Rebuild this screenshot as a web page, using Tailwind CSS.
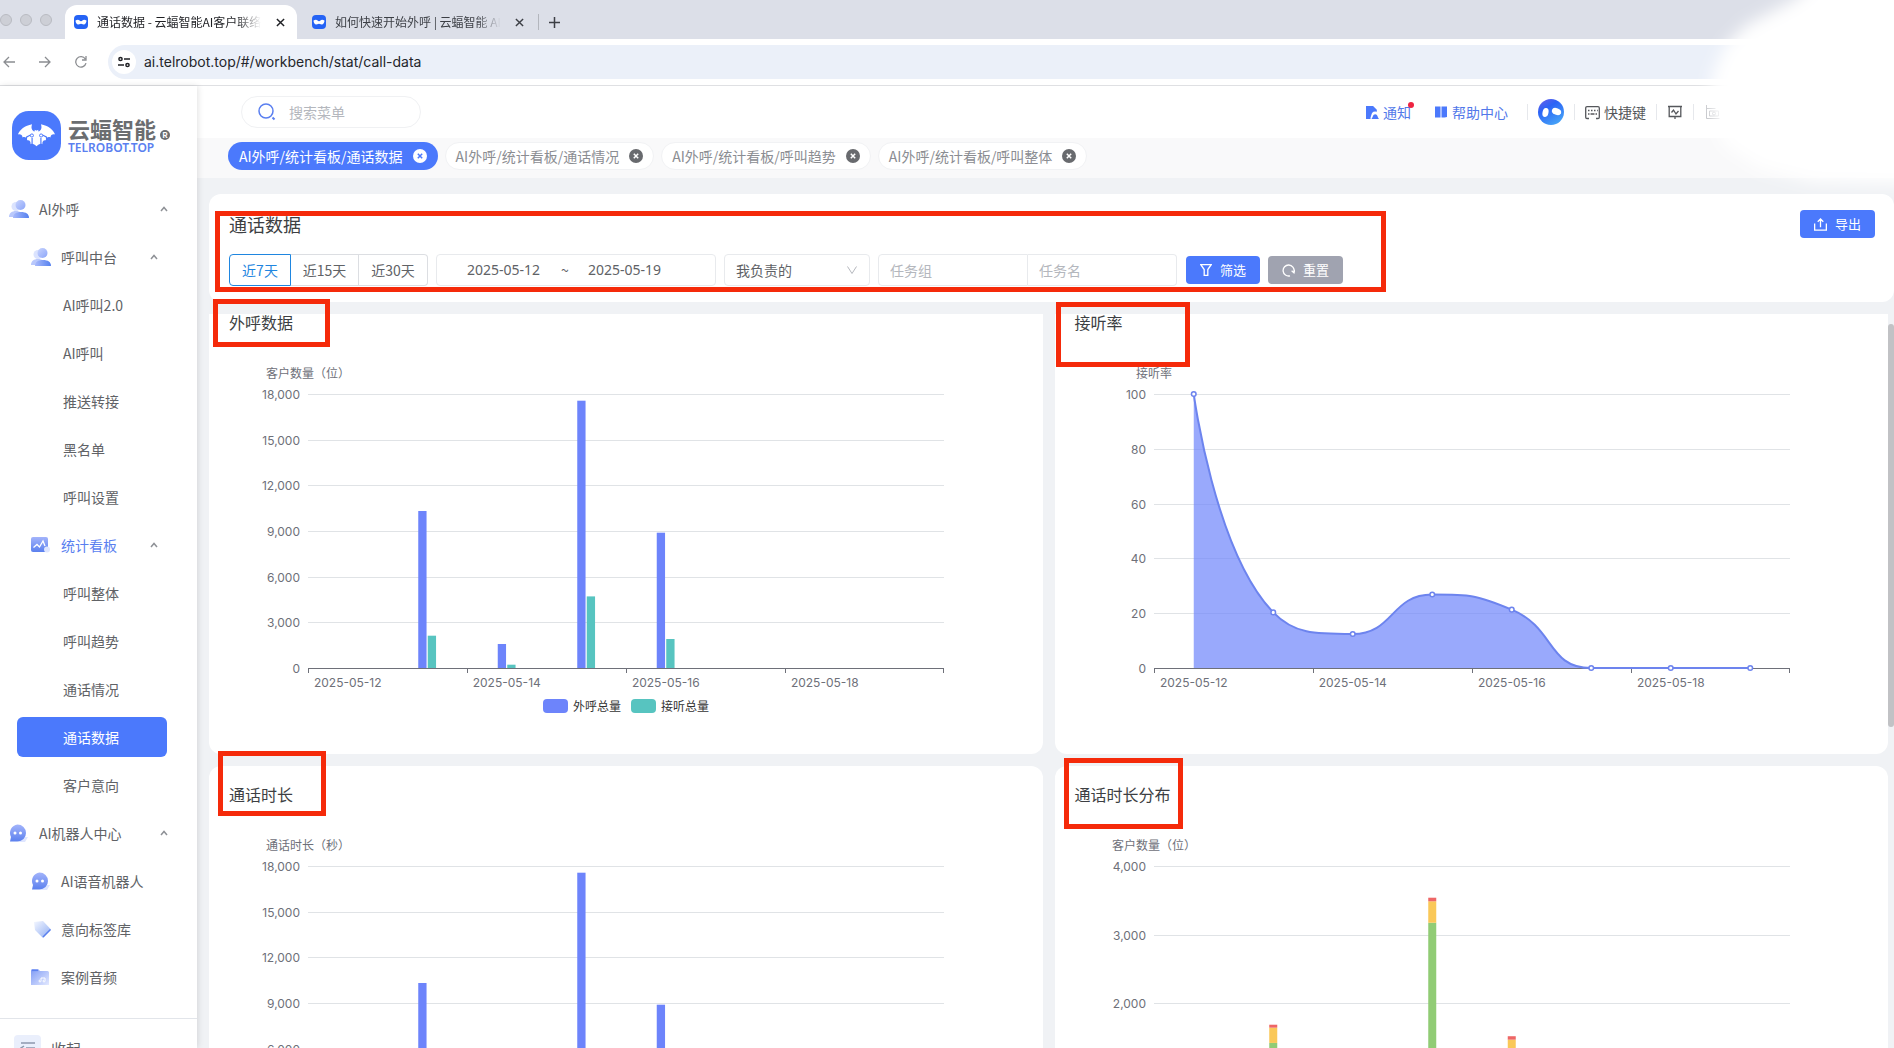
<!DOCTYPE html>
<html lang="zh-CN">
<head>
  <meta charset="UTF-8">
  <meta name="viewport" content="width=device-width, initial-scale=1.0">
  <title>通话数据 - 云蝠智能AI客户联络</title>

  <!-- Tailwind CSS CDN -->
  <script src="https://cdn.jsdelivr.net/npm/@tailwindcss/browser@4"></script>
</head>
<body class="relative flex h-screen flex-col overflow-hidden bg-white font-['Noto_Sans_CJK_SC',sans-serif] text-sm text-[#606266]">

  <!-- Shared icons -->
  <svg class="absolute size-0" aria-hidden="true" xmlns="http://www.w3.org/2000/svg">
    <defs>
      <linearGradient id="grad-soft" x1="0" y1="0" x2="1" y2="1">
        <stop offset="0" stop-color="#c9d4fd" />
        <stop offset="1" stop-color="#8ba5f9" />
      </linearGradient>
      <linearGradient id="grad-strong" x1="0" y1="0" x2="1" y2="0">
        <stop offset="0" stop-color="#a9bafb" />
        <stop offset="1" stop-color="#5581ef" />
      </linearGradient>
      <linearGradient id="grad-down" x1="0" y1="0" x2="0" y2="1">
        <stop offset="0" stop-color="#a3b4fb" />
        <stop offset="1" stop-color="#5b80ee" />
      </linearGradient>
      <linearGradient id="grad-fade" x1="0" y1="0" x2="1" y2="1">
        <stop offset="0" stop-color="#7f9bf5" />
        <stop offset="1" stop-color="#e3e9ff" />
      </linearGradient>
      <linearGradient id="grad-tag" x1="0" y1="0" x2="1" y2="1">
        <stop offset="0" stop-color="#f4f7ff" />
        <stop offset="1" stop-color="#8fadf3" />
      </linearGradient>
    </defs>
    <symbol id="icon-bat" viewBox="0 0 50 50">
      <rect width="50" height="50" rx="17" fill="#4b79fc" />
      <path fill="#fff" d="M6 24c2-5 7-9 14.500-10.500-1.500 4 0 6.500 2.500 7.500l.3-1.800 1.200.8h1l1.200-.8.3 1.800c2.500-1 4-3.500 2.500-7.500C37 15 42 19 44 24c-2.500-.8-4.500.4-4.800 3-2.400-1-4.400.2-4.800 2.800-2.600-.4-3.600 1.400-3.400 4.200-1.600-1-2.800-.4-6 2-3.200-2.400-4.400-3-6-2 .2-2.800-.8-4.600-3.400-4.200-.4-2.600-2.400-3.800-4.800-2.800C10.500 24.400 8.500 23.200 6 24z" />
      <path fill="none" stroke="#4b79fc" stroke-width="1.200" d="M14.500 30l.5-3.500 4-2M35.500 30l-.5-3.500-4-2M20.500 34v-6.500M29.500 34v-6.500" />
      <circle cx="20.300" cy="25" r="1.600" fill="#fff" stroke="#4b79fc" />
      <circle cx="29.700" cy="25" r="1.600" fill="#fff" stroke="#4b79fc" />
    </symbol>
    <symbol id="icon-bat-small" viewBox="0 0 14 14">
      <rect width="14" height="14" rx="4" fill="#2563f5" />
      <path fill="#fff" d="M1.500 5.500C3 4.500 4.500 4.300 5.300 5.200L6.400 6.200 7 5.900l.6.3 1.100-1c.8-.9 2.300-.7 3.800.3 0 2.300-1.200 4-2.800 4L7 8.700l-2.700.8c-1.600 0-2.800-1.700-2.800-4z" />
    </symbol>
    <symbol id="icon-users" viewBox="0 0 20 20">
      <circle cx="7" cy="7.500" r="4.500" fill="#dbe3fe" />
      <path d="M0 18c0-4 3-6 7-6s6 2 6 6z" fill="#b9c8fc" />
      <circle cx="11.500" cy="6" r="5" fill="url(#grad-soft)" />
      <path d="M4 19c0-4 3-6 8-6s8 2 8 6z" fill="url(#grad-strong)" />
    </symbol>
    <symbol id="icon-board" viewBox="0 0 20 20">
      <rect y="2" width="17" height="15" rx="2" fill="url(#grad-down)" />
      <path d="M2.500 12.500l3.500-3 2.500 2.500 3.500-6 2 5" fill="none" stroke="#fff" stroke-width="1.300" />
      <circle cx="16" cy="14.500" r="3" fill="#dfe6ff" />
    </symbol>
    <symbol id="icon-robot" viewBox="0 0 20 20">
      <path d="M12 14h7l-3 5H9z" fill="#dfe6ff" />
      <path d="M8.500 1.500a8.500 8.500 0 110 17H1l1-4.500a8.500 8.500 0 016.500-12.500z" fill="url(#grad-down)" />
      <circle cx="6" cy="10" r="1.500" fill="#fff" />
      <circle cx="11.500" cy="10" r="1.500" fill="#fff" />
    </symbol>
    <symbol id="icon-tag" viewBox="0 0 20 20">
      <path d="M3 3l9-1 8 8.500-8 8.500-8-8z" fill="url(#grad-tag)" />
      <path d="M12 18l7.500-7.500L13 17z" stroke="#5b80ee" fill="none" stroke-width="1.500" />
    </symbol>
    <symbol id="icon-folder" viewBox="0 0 20 20">
      <path d="M0 3.500a1.500 1.500 0 011.500-1.500H7l2 2h7.500A1.500 1.500 0 0118 5.500V18H0z" fill="url(#grad-fade)" />
      <path d="M1 3.500h6" stroke="#5b80ee" stroke-width="1.200" />
      <path d="M10 14v-3h4v3M10 14a1 1 0 11-1-1M14 14a1 1 0 11-1-1" fill="none" stroke="#fff" />
    </symbol>
    <symbol id="icon-up" viewBox="0 0 10 10">
      <path d="M2 7l3-3.500L8 7" fill="none" stroke="#8e9196" stroke-width="1.500" />
    </symbol>
    <symbol id="icon-x" viewBox="0 0 10 10">
      <path d="M1 1l8 8M9 1L1 9" fill="none" stroke="currentColor" stroke-width="1.600" />
    </symbol>
    <symbol id="icon-close-dot" viewBox="0 0 14 14">
      <circle cx="7" cy="7" r="7" fill="currentColor" />
      <path d="M4.800 4.800l4.400 4.400M9.200 4.800L4.800 9.200" fill="none" stroke="var(--x-color, #fff)" stroke-width="1.500" />
    </symbol>
  </svg>

  <!-- Browser tabs -->
  <div class="flex h-[39px] shrink-0 items-end bg-[#dcdfe8]">
    <div class="flex h-[39px] w-[65px] items-center gap-2">
      <span class="size-3 rounded-full border border-[#b9bbc2] bg-[#cdcfd6]"></span>
      <span class="size-3 rounded-full border border-[#b9bbc2] bg-[#cdcfd6]"></span>
      <span class="size-3 rounded-full border border-[#b9bbc2] bg-[#cdcfd6]"></span>
    </div>
    <div class="flex h-[34px] w-[232px] items-center justify-between rounded-t-xl bg-white pr-3 pl-[9px] text-xs text-[#1f2024]">
      <span class="flex items-center gap-[9px]">
        <svg class="size-[14px] shrink-0"><use href="#icon-bat-small" /></svg>
        <span class="mask-r-from-85% whitespace-nowrap">通话数据 - 云蝠智能AI客户联络</span>
      </span>
      <button type="button" aria-label="关闭标签页" class="shrink-0"><svg class="size-[9px]"><use href="#icon-x" /></svg></button>
    </div>
    <div class="flex h-[34px] w-[242px] items-center justify-between pl-[15px] text-xs text-[#3c3f45]">
      <span class="flex items-center gap-[9px]">
        <svg class="size-[14px] shrink-0"><use href="#icon-bat-small" /></svg>
        <span class="mask-r-from-85% whitespace-nowrap">如何快速开始外呼 | 云蝠智能 AI</span>
      </span>
      <span class="flex items-center">
        <button type="button" aria-label="关闭标签页"><svg class="size-[9px]"><use href="#icon-x" /></svg></button>
        <span class="ml-[14px] h-4 w-px bg-[#b3b6bd]"></span>
      </span>
    </div>
    <button type="button" aria-label="新建标签页" class="flex h-[34px] items-center pl-[10px] text-[#3c3f45]">
      <svg class="size-[11px]" viewBox="0 0 11 11"><path d="M5.500 0v11M0 5.500h11" stroke="currentColor" stroke-width="1.500" /></svg>
    </button>
  </div>

  <!-- Address bar -->
  <div class="flex h-[47px] shrink-0 items-center border-b border-[#dfe0e3] bg-white pl-[3px]">
    <div class="flex w-[105px] items-center gap-6 text-[#8b8d91]">
      <button type="button" aria-label="后退"><svg class="size-3" viewBox="0 0 12 12" fill="none" stroke="currentColor" stroke-width="1.300"><path d="M12 6H1M6 1L1 6l5 5" /></svg></button>
      <button type="button" aria-label="前进"><svg class="size-3" viewBox="0 0 12 12" fill="none" stroke="currentColor" stroke-width="1.300"><path d="M0 6h11M6 1l5 5-5 5" /></svg></button>
      <button type="button" aria-label="刷新"><svg class="size-3" viewBox="0 0 12 12" fill="none" stroke="currentColor" stroke-width="1.300"><path d="M11 7.200A5.200 5.200 0 1110.300 3M11 0v4H7" /></svg></button>
    </div>
    <div class="flex h-[34px] grow items-center rounded-l-full bg-[#ebf0f9] pl-1">
      <span class="flex size-6 items-center justify-center rounded-full bg-white text-[#1f2024]">
        <svg class="size-3" viewBox="0 0 12 12" fill="none" stroke="currentColor" stroke-width="1.500"><circle cx="2.500" cy="3" r="1.600" /><path d="M6 3h6M0 9h6" /><circle cx="9.500" cy="9" r="1.600" /></svg>
      </span>
      <input type="text" aria-label="地址" value="ai.telrobot.top/#/workbench/stat/call-data" class="ml-2 grow bg-transparent font-['Inter',sans-serif] text-sm text-[#24262b] outline-none">
    </div>
  </div>

  <div class="flex min-h-0 grow">
    <!-- Sidebar -->
    <aside class="z-10 flex w-[197px] shrink-0 flex-col bg-white shadow-[1px_0_6px_rgba(0,0,0,0.12)]">
      <div class="flex h-[99px] shrink-0 items-center pl-3">
        <svg class="mr-[7px] size-[49px] shrink-0"><use href="#icon-bat" /></svg>
        <div class="flex flex-col">
          <span class="flex items-end gap-1">
            <span class="text-[22px] leading-6 font-bold text-[#6b6d70]">云蝠智能</span>
            <span class="flex size-[10px] items-center justify-center rounded-full bg-[#6b6d70] text-[8px] leading-none font-bold text-white">R</span>
          </span>
          <span class="font-['Noto_Sans',sans-serif] text-xs leading-4 font-semibold text-[#5a7ff0]">TELROBOT.TOP</span>
        </div>
      </div>

      <nav class="min-h-0 grow overflow-hidden">
        <a href="#" class="flex h-12 items-center pr-7 pl-[9px]">
          <svg class="mr-[10px] size-5"><use href="#icon-users" /></svg><span class="grow">AI外呼</span><svg class="size-[10px]"><use href="#icon-up" /></svg>
        </a>
        <a href="#" class="flex h-12 items-center pr-[38px] pl-[31px]">
          <svg class="mr-[10px] size-5"><use href="#icon-users" /></svg><span class="grow">呼叫中台</span><svg class="size-[10px]"><use href="#icon-up" /></svg>
        </a>
        <a href="#" class="flex h-12 items-center pl-[63px]">AI呼叫2.0</a>
        <a href="#" class="flex h-12 items-center pl-[63px]">AI呼叫</a>
        <a href="#" class="flex h-12 items-center pl-[63px]">推送转接</a>
        <a href="#" class="flex h-12 items-center pl-[63px]">黑名单</a>
        <a href="#" class="flex h-12 items-center pl-[63px]">呼叫设置</a>
        <a href="#" class="flex h-12 items-center pr-[38px] pl-[31px] text-[#5a7ff0]">
          <svg class="mr-[10px] size-5"><use href="#icon-board" /></svg><span class="grow">统计看板</span><svg class="size-[10px]"><use href="#icon-up" /></svg>
        </a>
        <a href="#" class="flex h-12 items-center pl-[63px]">呼叫整体</a>
        <a href="#" class="flex h-12 items-center pl-[63px]">呼叫趋势</a>
        <a href="#" class="flex h-12 items-center pl-[63px]">通话情况</a>
        <a href="#" class="mx-[17px] my-1 mr-[30px] flex h-10 items-center rounded-md bg-[#4b79fc] pl-[46px] text-white">通话数据</a>
        <a href="#" class="flex h-12 items-center pl-[63px]">客户意向</a>
        <a href="#" class="flex h-12 items-center pr-7 pl-[9px]">
          <svg class="mr-[10px] size-5"><use href="#icon-robot" /></svg><span class="grow">AI机器人中心</span><svg class="size-[10px]"><use href="#icon-up" /></svg>
        </a>
        <a href="#" class="flex h-12 items-center pl-[31px]">
          <svg class="mr-[10px] size-5"><use href="#icon-robot" /></svg>AI语音机器人
        </a>
        <a href="#" class="flex h-12 items-center pl-[31px]">
          <svg class="mr-[10px] size-5"><use href="#icon-tag" /></svg>意向标签库
        </a>
        <a href="#" class="flex h-12 items-center pl-[31px]">
          <svg class="mr-[10px] size-5"><use href="#icon-folder" /></svg>案例音频
        </a>
      </nav>

      <button type="button" class="flex h-[30px] shrink-0 items-start gap-[10px] overflow-hidden border-t border-[#e2e5ea] pt-4 pl-[14px] text-[15px]">
        <span class="flex h-7 w-[27px] shrink-0 items-center justify-center rounded bg-[#eaeffc]">
          <svg class="size-4" viewBox="0 0 16 16" fill="none" stroke="#8d98ad" stroke-width="1.500"><path d="M1 2h14M6 7h9M1 13h14M4 5L1 7l3 2" /></svg>
        </span>
        <span class="leading-7">收起</span>
      </button>
    </aside>

    <!-- Main column -->
    <div class="flex min-w-0 grow flex-col bg-[#f0f2f5]">
      <header class="flex h-[52px] shrink-0 items-center justify-between bg-white pl-11">
        <label class="flex h-8 w-[180px] items-center rounded-full border border-[#f0f1f3] bg-white pl-4">
          <svg class="mr-[13px] size-[18px] shrink-0" viewBox="0 0 18 18" fill="none" stroke="#5a7ff0" stroke-width="1.500"><circle cx="8" cy="8" r="7" /><path d="M14.500 14.500l2 2" stroke-width="2" /></svg>
          <input type="text" aria-label="搜索菜单" placeholder="搜索菜单" class="w-full outline-none placeholder:text-[#b4b7bd]">
        </label>
        <div class="flex items-center pr-[174px]">
          <a href="#" class="relative flex items-center text-[#5278ea]">
            <svg class="mr-1 size-[13px]" viewBox="0 0 12 12" fill="#4b79fc"><path d="M0 0h6.500L10 3.500V5.400a3.400 3.400 0 00-5 2.600L4.200 10.500V12H0z" /><path d="M5.200 12c0-1.200 1-1 1.200-2.800a2.200 2.200 0 014.200 0c.2 1.800 1.200 1.600 1.200 2.800z" /></svg>
            通知
            <span class="absolute top-0 -right-[3px] size-[6px] rounded-full bg-[#ee2441]"></span>
          </a>
          <a href="#" class="ml-6 flex items-center text-[#5278ea]">
            <svg class="mr-[5px] size-3" viewBox="0 0 12 12" fill="#4b79fc"><path d="M0 .5h5.500v11H0zM6.500 .5H12v10.500l-2.500.5h-3z" /></svg>
            帮助中心
          </a>
          <span class="ml-[19px] h-4 w-px bg-[#e6e8ec]"></span>
          <svg class="mx-[10px] size-[26px]" viewBox="0 0 26 26">
            <defs><linearGradient id="avatar" x1="0" y1="0" x2=".6" y2="1"><stop offset="0" stop-color="#6f5be8" /><stop offset=".4" stop-color="#2b63f6" /><stop offset="1" stop-color="#45a0f7" /></linearGradient></defs>
            <circle cx="13" cy="13" r="13" fill="url(#avatar)" />
            <ellipse cx="7.500" cy="13.500" rx="3" ry="4.500" fill="#fff" transform="rotate(12 7.500 13.500)" />
            <ellipse cx="18.500" cy="12.500" rx="4.800" ry="3.300" fill="#fff" transform="rotate(22 18.500 12.500)" />
          </svg>
          <span class="h-4 w-px bg-[#e6e8ec]"></span>
          <a href="#" class="mx-[10px] flex items-center text-[#55575b]">
            <svg class="mr-1 size-[15px]" viewBox="0 0 15 15" fill="none" stroke="currentColor" stroke-width="1.300"><path d="M4 13.500H2a1.300 1.300 0 01-1.300-1.300V3A1.300 1.300 0 012 1.700h11A1.300 1.300 0 0114.300 3v9.200a1.300 1.300 0 01-1.300 1.300h-2" /><path d="M3 5.500h1.500M6 5.500h1.500M9 5.500h1.500M12 5.500h.8M3 9h1.500M5.500 9h4M10.500 9H12" /></svg>
            快捷键
          </a>
          <span class="h-4 w-px bg-[#e6e8ec]"></span>
          <button type="button" aria-label="监控" class="mx-[11px] text-[#55575b]">
            <svg class="size-[14px]" viewBox="0 0 14 14" fill="none" stroke="currentColor" stroke-width="1.300"><path d="M0 1.500h14M1.200 1.500v10h11.600v-10M7 11.500V14M3.500 7.500l2-2.500 2.500 4 2.500-3" /></svg>
          </button>
          <span class="h-4 w-px bg-[#e6e8ec]"></span>
          <button type="button" aria-label="报表" class="ml-3 text-[#b9bbc0]">
            <svg class="size-[14px]" viewBox="0 0 14 14" fill="none" stroke="currentColor"><path d="M.5 0v13.500h13M.5 3.500h9M3.500 11V6h9v5z" /><circle cx="8" cy="8.500" r="1.500" /></svg>
          </button>
        </div>
      </header>

      <!-- Page tabs -->
      <div class="flex h-10 shrink-0 items-center gap-[7px] bg-[#f9f9fa] pb-1 pl-[31px] text-sm whitespace-nowrap text-[#8b8d92]">
        <a href="#" class="flex h-7 items-center gap-[10px] rounded-full bg-[#4b79fc] px-[11px] text-white">AI外呼/统计看板/通话数据 <svg class="size-[14px] [--x-color:#4b79fc]"><use href="#icon-close-dot" /></svg></a>
        <a href="#" class="flex h-7 items-center gap-[10px] rounded-full border border-[#f1f2f4] bg-white px-[10px]">AI外呼/统计看板/通话情况 <svg class="size-[14px] text-[#686a6e]"><use href="#icon-close-dot" /></svg></a>
        <a href="#" class="flex h-7 items-center gap-[10px] rounded-full border border-[#f1f2f4] bg-white px-[10px]">AI外呼/统计看板/呼叫趋势 <svg class="size-[14px] text-[#686a6e]"><use href="#icon-close-dot" /></svg></a>
        <a href="#" class="flex h-7 items-center gap-[10px] rounded-full border border-[#f1f2f4] bg-white px-[10px]">AI外呼/统计看板/呼叫整体 <svg class="size-[14px] text-[#686a6e]"><use href="#icon-close-dot" /></svg></a>
      </div>

      <main class="flex min-h-0 grow flex-col gap-3 pt-4 pl-3">
        <!-- Filters -->
        <section class="flex h-[108px] shrink-0 flex-col rounded-xl bg-white pt-4 pr-[19px] pl-5">
          <div class="flex h-7 items-center justify-between">
            <h1 class="text-lg text-[#3d3f43]">通话数据</h1>
            <button type="button" class="flex h-7 w-[75px] items-center justify-center gap-2 rounded bg-[#4b79fc] text-[13px] text-white">
              <svg class="size-[13px]" viewBox="0 0 14 14" fill="none" stroke="currentColor" stroke-width="1.400"><path d="M.7 6v7h12.600V6M7 10V1M4 4l3-3 3 3" /></svg>
              导出
            </button>
          </div>
          <form class="mt-4 flex h-8 items-center gap-2">
            <div class="flex h-8">
              <button type="button" class="w-[62px] rounded-l border border-[#1f86e0] text-[#1f86e0]">近7天</button>
              <button type="button" class="w-[68px] border border-l-0 border-[#dcdee2]">近15天</button>
              <button type="button" class="w-[69px] rounded-r border border-l-0 border-[#dcdee2]">近30天</button>
            </div>
            <div class="flex h-8 w-[280px] items-center rounded border border-[#e8eaed] pl-[30px]">
              <input type="text" aria-label="开始日期" value="2025-05-12" class="w-20 font-['Noto_Sans',sans-serif] outline-none">
              <span class="w-[41px] pl-[14px]">~</span>
              <input type="text" aria-label="结束日期" value="2025-05-19" class="w-20 font-['Noto_Sans',sans-serif] outline-none">
            </div>
            <div class="relative h-8 w-[146px]">
              <select aria-label="负责范围" class="h-8 w-full appearance-none rounded border border-[#e8eaed] bg-white pl-[11px] outline-none">
                <option>我负责的</option>
              </select>
              <svg class="pointer-events-none absolute top-[11px] right-[13px] size-[10px]" viewBox="0 0 10 10" fill="none" stroke="#b4b7bd"><path d="M.5 1.500L5 8.500l4.500-7" /></svg>
            </div>
            <div class="flex h-8">
              <input type="text" aria-label="任务组" placeholder="任务组" class="w-[150px] rounded-l border border-[#e8eaed] px-[11px] outline-none placeholder:text-[#b4b7bd]">
              <input type="text" aria-label="任务名" placeholder="任务名" class="w-[149px] rounded-r border border-l-0 border-[#e8eaed] px-[11px] outline-none placeholder:text-[#b4b7bd]">
            </div>
            <button type="button" class="ml-px flex h-7 w-[74px] items-center justify-center gap-2 rounded bg-[#4b79fc] text-[13px] text-white">
              <svg class="size-3" viewBox="0 0 12 12" fill="none" stroke="currentColor" stroke-width="1.300"><path d="M.8.7h10.400L7.800 5.500v5.800H4.200V5.500z" /></svg>筛选
            </button>
            <button type="button" class="flex h-7 w-[75px] items-center justify-center gap-2 rounded bg-[#a0a3b0] text-[13px] text-white">
              <svg class="size-[13px]" viewBox="0 0 13 13" fill="none" stroke="currentColor" stroke-width="1.300"><path d="M8 11.800A5.500 5.500 0 1112 7.500M9.600 6.800L12 8.800l1-3" /></svg>重置
            </button>
          </form>
        </section>

        <!-- Charts -->
        <div class="flex min-h-0 grow overflow-hidden">
          <div class="-mt-5 grid min-w-0 grow auto-rows-[460px] grid-cols-2 gap-3">
            <section class="rounded-xl bg-white px-5 pt-4">
              <h2 class="text-base leading-6 text-[#3d3f43]">外呼数据</h2>
              <div id="chart-calls" class="h-[400px]"></div>
            </section>
            <section class="rounded-xl bg-white px-5 pt-4">
              <h2 class="text-base leading-6 text-[#3d3f43]">接听率</h2>
              <div id="chart-rate" class="h-[400px]"></div>
            </section>
            <section class="rounded-xl bg-white px-5 pt-4">
              <h2 class="text-base leading-6 text-[#3d3f43]">通话时长</h2>
              <div id="chart-duration" class="h-[400px]"></div>
            </section>
            <section class="rounded-xl bg-white px-5 pt-4">
              <h2 class="text-base leading-6 text-[#3d3f43]">通话时长分布</h2>
              <div id="chart-spread" class="h-[400px]"></div>
            </section>
          </div>
          <div class="w-[6px] shrink-0 pt-[10px]">
            <div class="h-[403px] rounded-full bg-[#c1c2c5]"></div>
          </div>
        </div>
      </main>
    </div>
  </div>

  <!-- Red marker boxes -->
  <div class="pointer-events-none absolute top-[211px] left-[215px] z-20 h-[81px] w-[1171px] border-5 border-[#f52a0a]"></div>
  <div class="pointer-events-none absolute top-[299px] left-[213px] z-20 h-12 w-[117px] border-5 border-[#f52a0a]"></div>
  <div class="pointer-events-none absolute top-[302px] left-[1056px] z-20 h-[65px] w-[134px] border-5 border-[#f52a0a]"></div>
  <div class="pointer-events-none absolute top-[751px] left-[218px] z-20 h-[65px] w-[108px] border-5 border-[#f52a0a]"></div>
  <div class="pointer-events-none absolute top-[758px] left-[1064px] z-20 h-[71px] w-[119px] border-5 border-[#f52a0a]"></div>

  <!-- White smudge over the account area -->
  <svg class="pointer-events-none absolute top-0 right-0 z-20 h-[220px] w-[260px]" viewBox="0 0 260 220">
    <defs><filter id="smudge" x="-20%" y="-20%" width="140%" height="140%"><feGaussianBlur stdDeviation="8" /></filter></defs>
    <path filter="url(#smudge)" fill="#fff" d="M195-30L160 0 112 25 92 45 78 75 76 110 90 145 125 168 180 182 290 184 290-30z" />
  </svg>

  <script>
    const days = ['2025-05-12', '2025-05-13', '2025-05-14', '2025-05-15', '2025-05-16', '2025-05-17', '2025-05-18', '2025-05-19'];
    const TOP = 60;
    const BOTTOM = 334;

    const callSeries = [
      { name: '外呼总量', color: '#6d84fb', data: [0, 10314, 1577, 17560, 8889, 0, 0, 0] },
      { name: '接听总量', color: '#57c4c0', data: [0, 2122, 217, 4704, 1905, 0, 0, 0] }
    ];

    const charts = [
      { id: 'chart-calls', type: 'bar', name: '客户数量（位）', max: 18000, step: 3000, series: callSeries, legend: true },
      { id: 'chart-rate', type: 'line', name: '接听率', max: 100, step: 20, data: [100, 20.3, 12.4, 26.8, 21.3, 0, 0, 0] },
      { id: 'chart-duration', type: 'bar', name: '通话时长（秒）', max: 18000, step: 3000, series: [callSeries[0]] },
      {
        id: 'chart-spread', type: 'stack', name: '客户数量（位）', max: 4000, step: 1000,
        series: [
          { color: '#91cc75', data: [0, 1417, 0, 3172, 1290, 0, 0, 0] },
          { color: '#fac858', data: [0, 223, 0, 313, 175, 0, 0, 0] },
          { color: '#ee6666', data: [0, 43, 0, 52, 50, 0, 0, 0] }
        ]
      }
    ];

    const clamp = (v, a, b) => Math.max(Math.min(v, Math.max(a, b)), Math.min(a, b));

    // Smooth curve whose control points never leave the box of their segment
    function smoothPath(pts) {
      let d = `M${pts[0][0]} ${pts[0][1]}`;
      let c0 = pts[0];
      for (let i = 1; i < pts.length; i++) {
        const [px, py] = pts[i - 1];
        const [x, y] = pts[i];
        let c1 = [x, y];
        let next = [x, y];
        if (i < pts.length - 1) {
          const [nx, ny] = pts[i + 1];
          const prevLen = Math.hypot(x - px, y - py);
          const nextLen = Math.hypot(nx - x, ny - y);
          const ratio = nextLen / (nextLen + prevLen);
          next = [clamp(x + (nx - px) * 0.5 * ratio, x, nx), clamp(y + (ny - py) * 0.5 * ratio, y, ny)];
          c1 = [
            clamp(x - (next[0] - x) * prevLen / nextLen, px, x),
            clamp(y - (next[1] - y) * prevLen / nextLen, py, y)
          ];
          next = [x + (x - c1[0]) * nextLen / prevLen, y + (y - c1[1]) * nextLen / prevLen];
        }
        d += `C${c0[0]} ${c0[1]} ${c1[0]} ${c1[1]} ${x} ${y}`;
        c0 = next;
      }
      return d;
    }

    function drawChart(chart) {
      const box = document.getElementById(chart.id);
      const width = box.clientWidth;
      const left = Math.round(width * 0.1);
      const right = width - left;
      const band = (right - left) / days.length;
      const toY = v => BOTTOM - v / chart.max * (BOTTOM - TOP);
      const center = i => left + band * (i + 0.5);
      let out = '';

      for (let v = 0; v <= chart.max; v += chart.step) {
        const y = Math.round(toY(v)) + 0.5;
        if (v > 0) out += `<line x1="${left}" x2="${right}" y1="${y}" y2="${y}" stroke="#e0e3e6" />`;
        out += `<text x="${left - 8}" y="${y + 4}" text-anchor="end">${v.toLocaleString('en-US')}</text>`;
      }
      out += `<text x="${left}" y="44" text-anchor="middle">${chart.name}</text>`;

      if (chart.type === 'bar') {
        chart.series.forEach((s, n) => s.data.forEach((v, i) => {
          if (v) out += `<rect x="${center(i) - 9 + n * 9.5}" y="${toY(v)}" width="8.300" height="${BOTTOM - toY(v)}" fill="${s.color}" />`;
        }));
      } else if (chart.type === 'stack') {
        days.forEach((day, i) => {
          let sum = 0;
          chart.series.forEach(s => {
            const from = toY(sum);
            sum += s.data[i];
            if (s.data[i]) out += `<rect x="${center(i) - 4}" y="${toY(sum)}" width="8" height="${from - toY(sum)}" fill="${s.color}" />`;
          });
        });
      } else {
        const d = smoothPath(chart.data.map((v, i) => [center(i), toY(v)]));
        out += `<path d="${d}V${BOTTOM}H${center(0)}z" fill="#6d84fb" fill-opacity="0.7" />`;
      }

      out += `<line x1="${left}" x2="${right}" y1="${BOTTOM + 0.5}" y2="${BOTTOM + 0.5}" stroke="#6e7079" />`;
      for (let i = 0; i <= days.length; i += 2) {
        const x = Math.round(left + band * i) + (i === days.length ? -0.5 : 0.5);
        out += `<line x1="${x}" x2="${x}" y1="${BOTTOM}" y2="${BOTTOM + 5}" stroke="#6e7079" />`;
        if (i < days.length) out += `<text x="${center(i)}" y="353" text-anchor="middle">${days[i]}</text>`;
      }

      if (chart.type === 'line') {
        out += `<path d="${smoothPath(chart.data.map((v, i) => [center(i), toY(v)]))}" fill="none" stroke="#6d84ee" stroke-width="2" />`;
        chart.data.forEach((v, i) => {
          out += `<circle cx="${center(i)}" cy="${toY(v)}" r="2.300" fill="#fff" stroke="#6d84ee" stroke-width="1.500" />`;
        });
      }

      if (chart.legend) {
        chart.series.forEach((s, n) => {
          const x = width / 2 - 83 + n * 88;
          out += `<rect x="${x}" y="365" width="25" height="14" rx="4" fill="${s.color}" />`;
          out += `<text x="${x + 30}" y="377" class="fill-[#333]">${s.name}</text>`;
        });
      }

      box.innerHTML = `<svg width="${width}" height="400" class="block fill-[#6e7079] font-['Inter','Noto_Sans_CJK_SC',sans-serif] text-xs">${out}</svg>`;
    }

    // Redraw whenever a card changes its width
    charts.forEach(chart => {
      new ResizeObserver(() => drawChart(chart)).observe(document.getElementById(chart.id));
    });
  </script>
</body>
</html>
